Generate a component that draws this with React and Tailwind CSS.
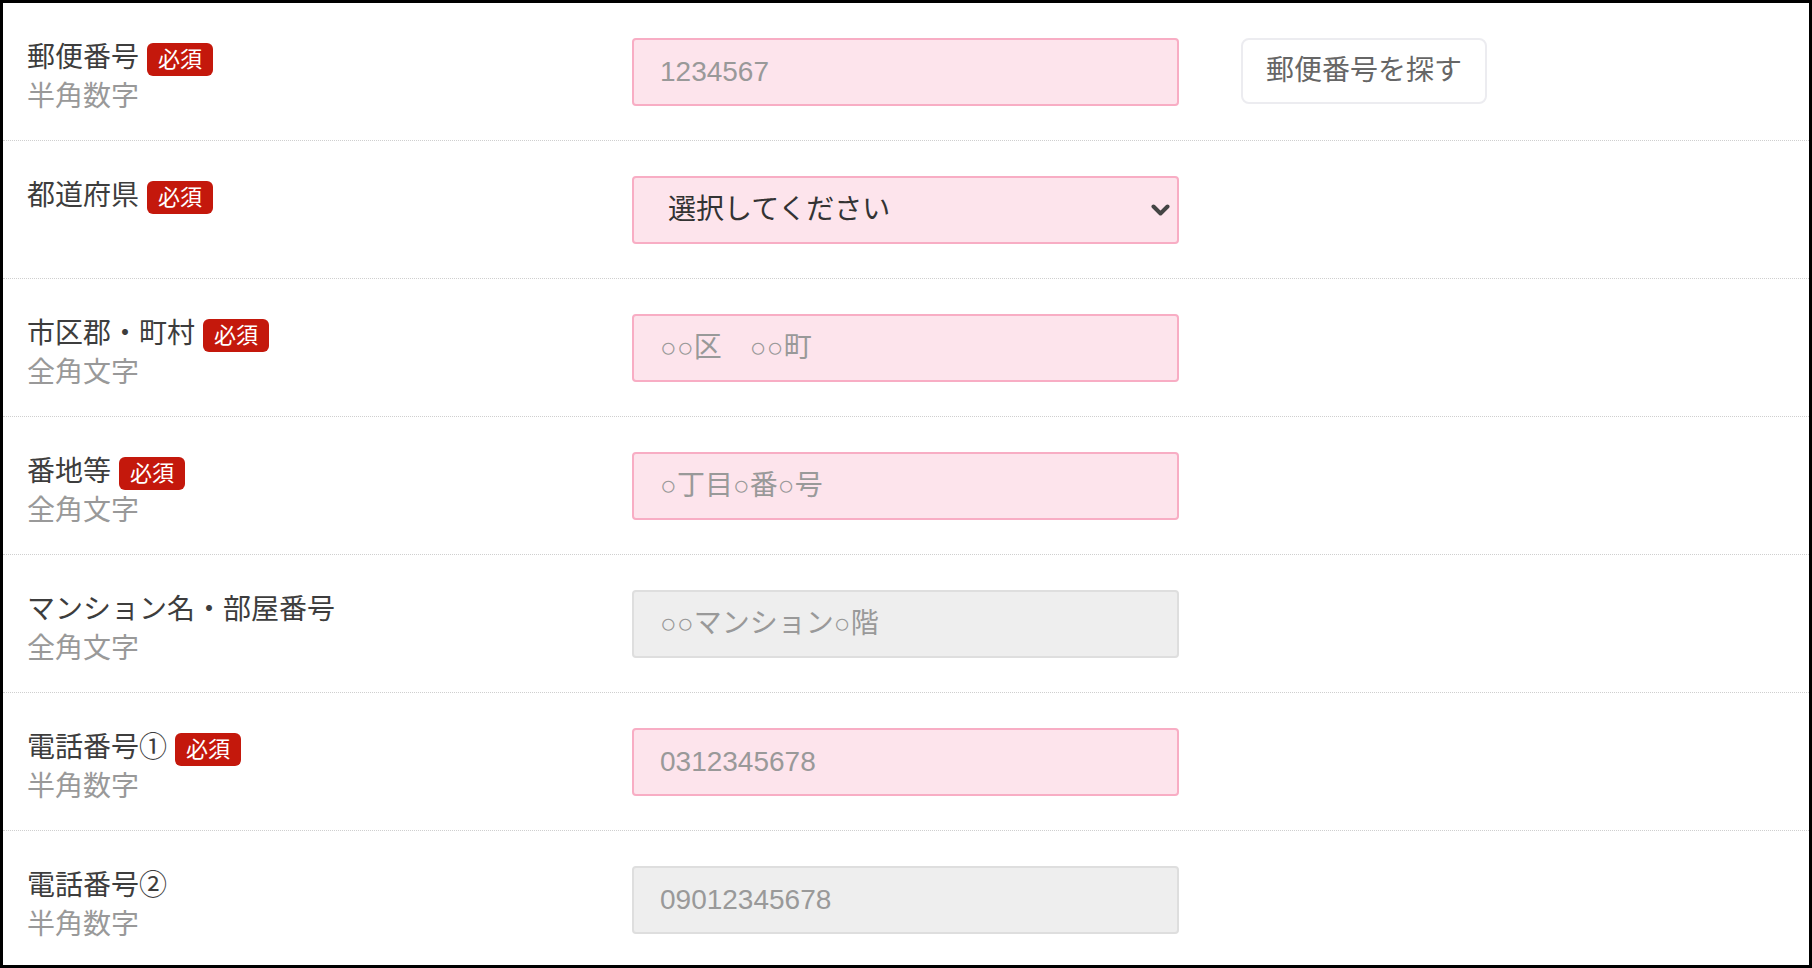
import React from 'react';

const rows = [
  { label: '郵便番号', sub: '半角数字', required: true, placeholder: '1234567', button: '郵便番号を探す' },
  { label: '都道府県', required: true, select: true },
  { label: '市区郡・町村', sub: '全角文字', required: true, placeholder: '○○区　○○町' },
  { label: '番地等', sub: '全角文字', required: true, placeholder: '○丁目○番○号' },
  { label: 'マンション名・部屋番号', sub: '全角文字', placeholder: '○○マンション○階' },
  { label: '電話番号①', sub: '半角数字', required: true, placeholder: '0312345678' },
  { label: '電話番号②', sub: '半角数字', placeholder: '09012345678' },
];

const font = "font-['Liberation_Sans','Noto_Sans_CJK_JP',sans-serif]";

const Badge = () => (
  <span className="ml-2 inline-flex h-[33px] items-center rounded-[6px] bg-[#c4180c] px-[11px] text-[22px] leading-none text-white translate-y-[2px]">
    必須
  </span>
);

const Field = ({ row }) => {
  if (row.select) {
    return (
      <div className="relative w-[547px]">
        <select
          defaultValue=""
          className="h-[68px] w-full appearance-none rounded-[4px] border-2 border-[#f8adc4] bg-[#fde4ec] pl-[34px] text-[28px] text-[#333] outline-none"
        >
          <option value="">選択してください</option>
        </select>
        <svg
          className="pointer-events-none absolute right-[9px] top-1/2 -translate-y-1/2"
          width="19"
          height="13"
          viewBox="0 0 19 13"
          fill="none"
        >
          <path d="M2.5 3 L9.5 10 L16.5 3" stroke="#444" strokeWidth="4" strokeLinecap="round" strokeLinejoin="round" />
        </svg>
      </div>
    );
  }
  const pink = row.required;
  return (
    <input
      type="text"
      placeholder={row.placeholder}
      className={
        pink
          ? 'h-[68px] w-[547px] rounded-[4px] border-2 border-[#f8adc4] bg-[#fde4ec] pl-[26px] text-[28px] text-[#333] outline-none placeholder:text-[#999]'
          : 'h-[68px] w-[547px] rounded-[4px] border-2 border-[#dedede] bg-[#eeeeee] pl-[26px] text-[28px] text-[#333] outline-none placeholder:text-[#999]'
      }
    />
  );
};

export default function App() {
  return (
    <div className={`h-[968px] w-full overflow-hidden border-[3px] border-black bg-white ${font}`}>
      {rows.map((row, i) => (
        <div key={i} className="flex h-[138px] shrink-0 border-b border-dotted border-[#cfcfcf] pt-[35px]">
          <div className="w-[629px] shrink-0 pl-6 text-[28px] leading-[39px]">
            <div className="flex items-center text-[#3d3d3d]">
              <span>{row.label}</span>
              {row.required && <Badge />}
            </div>
            {row.sub && <div className="text-[#999]">{row.sub}</div>}
          </div>
          <div className="flex items-start">
            <Field row={row} />
            {row.button && (
              <button className="ml-[62px] h-[66px] rounded-[8px] border-2 border-[#ececf0] bg-white px-[23px] text-[28px] text-[#666]">
                {row.button}
              </button>
            )}
          </div>
        </div>
      ))}
    </div>
  );
}
